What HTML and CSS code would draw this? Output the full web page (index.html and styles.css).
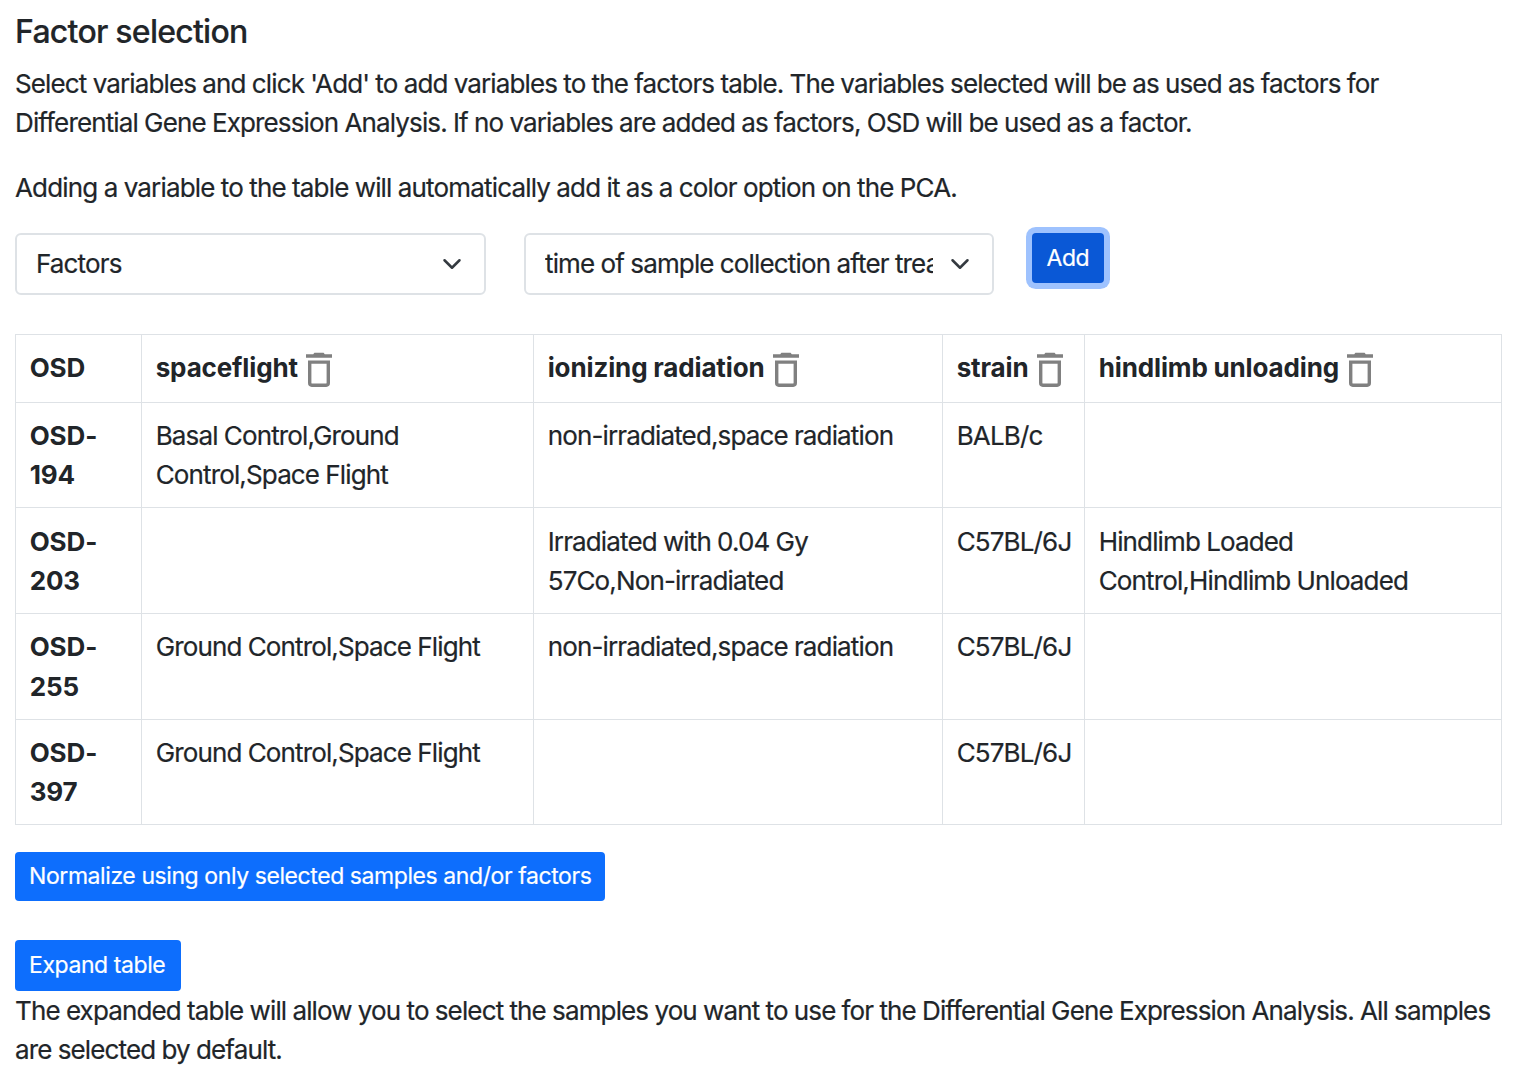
FILE: index.html
```html
<!DOCTYPE html>
<html lang="en">
<head>
<meta charset="utf-8">
<title>Factor selection</title>
<link rel="stylesheet" href="styles.css">
</head>
<body>
<svg class="sprite" aria-hidden="true">
  <symbol id="trash" viewBox="0 0 28 36">
    <path d="M1 2.2H8.200L9.400.8H18.600L19.800 2.200H27V5.800H1Z" fill="#808080"/>
    <path d="M4.700 10.100H23.300V31.100Q23.300 33.200 21.200 33.200H6.800Q4.700 33.200 4.700 31.100Z" fill="none" stroke="#808080" stroke-width="3.400"/>
  </symbol>
  <symbol id="chevron" viewBox="0 0 16 16">
    <path d="m2 5 6 6 6-6" fill="none" stroke="#343a40" stroke-width="2" stroke-linecap="round" stroke-linejoin="round"/>
  </symbol>
</svg>
<main class="panel">
  <h1 class="title">Factor selection</h1>
  <p class="text">Select variables and click 'Add' to add variables to the factors table. The variables selected will be as used as factors for<br>Differential Gene Expression Analysis. If no variables are added as factors, OSD will be used as a factor.</p>
  <p class="text note">Adding a variable to the table will automatically add it as a color option on the PCA.</p>

  <div class="controls">
    <div class="select category"><span class="value">Factors</span><svg class="chevron"><use href="#chevron"/></svg></div>
    <div class="select variable"><span class="value">time of sample collection after treatment</span><svg class="chevron"><use href="#chevron"/></svg></div>
    <button class="btn add">Add</button>
  </div>

  <table class="factors">
    <colgroup><col class="c1"><col class="c2"><col class="c3"><col class="c4"><col class="c5"></colgroup>
    <thead>
      <tr>
        <th>OSD</th>
        <th><div class="head"><span>spaceflight</span><svg class="trash"><use href="#trash"/></svg></div></th>
        <th><div class="head"><span>ionizing radiation</span><svg class="trash"><use href="#trash"/></svg></div></th>
        <th><div class="head"><span>strain</span><svg class="trash"><use href="#trash"/></svg></div></th>
        <th><div class="head"><span>hindlimb unloading</span><svg class="trash"><use href="#trash"/></svg></div></th>
      </tr>
    </thead>
    <tbody>
      <tr><th>OSD-<br>194</th><td>Basal Control,Ground<br>Control,Space Flight</td><td>non-irradiated,space radiation</td><td>BALB/c</td><td></td></tr>
      <tr><th>OSD-<br>203</th><td></td><td>Irradiated with 0.04 Gy<br>57Co,Non-irradiated</td><td>C57BL/6J</td><td>Hindlimb Loaded<br>Control,Hindlimb Unloaded</td></tr>
      <tr><th>OSD-<br>255</th><td>Ground Control,Space Flight</td><td>non-irradiated,space radiation</td><td>C57BL/6J</td><td></td></tr>
      <tr><th>OSD-<br>397</th><td>Ground Control,Space Flight</td><td></td><td>C57BL/6J</td><td></td></tr>
    </tbody>
  </table>

  <button class="btn normalize">Normalize using only selected samples and/or factors</button>
  <button class="btn expand">Expand table</button>
  <p class="text closing">The expanded table will allow you to select the samples you want to use for the Differential Gene Expression Analysis. All samples<br>are selected by default.</p>
</main>
</body>
</html>
```
FILE: styles.css
```css
* { box-sizing: border-box; }
body {
  margin: 0;
  background: #fff;
  color: #212529;
  font: 400 26px/39.2px Inter, "Liberation Sans", sans-serif;
  letter-spacing: -0.86px;
  word-spacing: -0.3px;
  -webkit-text-stroke: 0.2px;
}
.sprite { position: absolute; width: 0; height: 0; }
.panel {
  display: flex;
  flex-direction: column;
  align-items: flex-start;
  padding: 12px 14px 0 15px;
}
.title {
  margin: 0 0 13px;
  font-size: 32px;
  font-weight: 500;
  line-height: 39px;
  letter-spacing: -0.75px;
  word-spacing: 0;
}
.text { margin: 0; white-space: nowrap; }
.note { margin-top: 26px; letter-spacing: -0.82px; }
.closing { line-height: 39px; }
.controls {
  display: flex;
  align-items: flex-start;
  margin-top: 25px;
}
.select {
  display: flex;
  align-items: center;
  justify-content: space-between;
  height: 62px;
  padding: 0 22px 0 19px;
  border: 2px solid #dee2e6;
  border-radius: 6px;
}
.category { width: 471px; }
.variable { width: 470px; margin-left: 38px; }
.value { width: 388px; overflow: hidden; white-space: nowrap; }
.variable .value { letter-spacing: -0.84px; }
.chevron { width: 20px; height: 20px; }
.btn {
  padding: 0 14px;
  border: 0;
  border-radius: 4px;
  background: #0d6efd;
  color: #fff;
  font: 400 23px/49px Inter, "Liberation Sans", sans-serif;
  letter-spacing: -0.42px;
  text-align: left;
  white-space: nowrap;
}
.add {
  width: 72px;
  height: 50px;
  margin-left: 38px;
  padding: 1px 0 0 14.5px;
  background: #0a58d6;
  box-shadow: 0 0 0 6px #9ec2fe;
}
.factors {
  width: 1487px;
  margin-top: 39px;
  border-collapse: collapse;
  table-layout: fixed;
}
.c1 { width: 126px; }
.c2 { width: 392px; }
.c3 { width: 409px; }
.c4 { width: 142px; }
.c5 { width: 417px; }
.factors th, .factors td {
  height: 105.7px;
  padding: 13.5px 0 0 13.7px;
  border: 1px solid #dee2e6;
  text-align: left;
  vertical-align: top;
  white-space: nowrap;
}
.factors th { letter-spacing: -0.13px; -webkit-text-stroke: 0; }
.factors thead th { height: 68px; }
.head { display: flex; gap: 7px; }
.trash { width: 28px; height: 36px; margin-top: 4px; }
.normalize { width: 590px; height: 49px; margin-top: 27px; }
.expand { width: 166px; height: 51px; margin-top: 39px; }
```
